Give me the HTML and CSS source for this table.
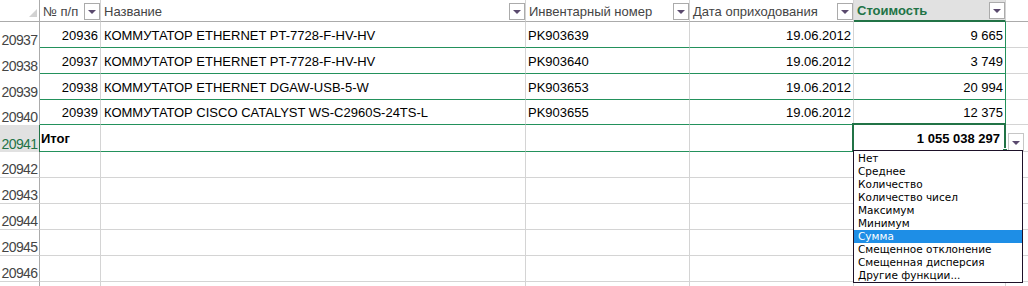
FILE: index.html
```html
<!DOCTYPE html>
<html lang="ru">
<head>
<meta charset="utf-8">
<title>Итог</title>
<link rel="stylesheet" href="styles.css">
</head>
<body>
<div class="sheet">
  <div class="row head">
    <div class="corner"><span class="tri"></span></div>
    <div class="hc"><span>№ п/п</span><span class="fb"></span></div>
    <div class="hc"><span>Название</span><span class="fb"></span></div>
    <div class="hc"><span>Инвентарный номер</span><span class="fb"></span></div>
    <div class="hc"><span>Дата оприходования</span><span class="fb"></span></div>
    <div class="hc active"><span>Стоимость</span><span class="fb"></span></div>
    <div class="hc rest"></div>
  </div>

  <div class="row data">
    <div class="rh">20937</div>
    <div class="c r">20936</div>
    <div class="c b">КОММУТАТОР ETHERNET PT-7728-F-HV-HV</div>
    <div class="c i">PK903639</div>
    <div class="c r">19.06.2012</div>
    <div class="c r last">9 665</div>
    <div class="c rest"></div>
  </div>
  <div class="row data">
    <div class="rh">20938</div>
    <div class="c r">20937</div>
    <div class="c b">КОММУТАТОР ETHERNET PT-7728-F-HV-HV</div>
    <div class="c i">PK903640</div>
    <div class="c r">19.06.2012</div>
    <div class="c r last">3 749</div>
    <div class="c rest"></div>
  </div>
  <div class="row data">
    <div class="rh">20939</div>
    <div class="c r">20938</div>
    <div class="c b">КОММУТАТОР ETHERNET DGAW-USB-5-W</div>
    <div class="c i">PK903653</div>
    <div class="c r">19.06.2012</div>
    <div class="c r last">20 994</div>
    <div class="c rest"></div>
  </div>
  <div class="row data short">
    <div class="rh">20940</div>
    <div class="c r">20939</div>
    <div class="c b">КОММУТАТОР CISCO CATALYST WS-C2960S-24TS-L</div>
    <div class="c i">PK903655</div>
    <div class="c r">19.06.2012</div>
    <div class="c r last">12 375</div>
    <div class="c rest"></div>
  </div>

  <div class="row total">
    <div class="rh sel">20941</div>
    <div class="c t">Итог</div>
    <div class="c"></div>
    <div class="c"></div>
    <div class="c"></div>
    <div class="c r last tv">1 055 038 297<span class="handle"></span></div>
    <div class="c rest"><span class="ddb"></span></div>
  </div>

  <div class="row empty">
    <div class="rh">20942</div>
    <div class="c"></div><div class="c"></div><div class="c"></div><div class="c"></div><div class="c"></div><div class="c rest"></div>
  </div>
  <div class="row empty">
    <div class="rh">20943</div>
    <div class="c"></div><div class="c"></div><div class="c"></div><div class="c"></div><div class="c"></div><div class="c rest"></div>
  </div>
  <div class="row empty">
    <div class="rh">20944</div>
    <div class="c"></div><div class="c"></div><div class="c"></div><div class="c"></div><div class="c"></div><div class="c rest"></div>
  </div>
  <div class="row empty">
    <div class="rh">20945</div>
    <div class="c"></div><div class="c"></div><div class="c"></div><div class="c"></div><div class="c"></div><div class="c rest"></div>
  </div>
  <div class="row empty">
    <div class="rh">20946</div>
    <div class="c"></div><div class="c"></div><div class="c"></div><div class="c"></div><div class="c"></div><div class="c rest"></div>
  </div>
  <div class="row empty">
    <div class="rh"></div>
    <div class="c"></div><div class="c"></div><div class="c"></div><div class="c"></div><div class="c"></div><div class="c rest"></div>
  </div>

  <ul class="menu">
    <li>Нет</li>
    <li>Среднее</li>
    <li>Количество</li>
    <li>Количество чисел</li>
    <li>Максимум</li>
    <li>Минимум</li>
    <li class="hl">Сумма</li>
    <li>Смещенное отклонение</li>
    <li>Смещенная дисперсия</li>
    <li>Другие функции...</li>
  </ul>
</div>
</body>
</html>
```

FILE: styles.css
```css
* { box-sizing: border-box; }
html, body {
  margin: 0;
  padding: 0;
  background: #fff;
  overflow: hidden;
}
body {
  font-family: "Liberation Sans", Arial, sans-serif;
  font-size: 13px;
  color: #000;
}
.sheet {
  position: relative;
  width: 1028px;
  height: 286px;
  overflow: hidden;
}
.row {
  display: grid;
  grid-template-columns: 40px 61px 425px 164px 164px 152px 1fr;
  height: 26px;
}
.row.head { height: 22px; }
.row.short { height: 25px; }
.row.total { height: 27px; }

/* header */
.corner {
  display: flex;
  justify-content: flex-end;
  align-items: flex-end;
  padding: 0 2px 4px 0;
  border-right: 1px solid #ababab;
  border-bottom: 1px solid #ababab;
}
.tri {
  width: 0;
  height: 0;
  border-left: 8px solid transparent;
  border-bottom: 8px solid #d2d2d2;
}
.hc {
  display: flex;
  align-items: center;
  justify-content: space-between;
  padding: 0 0 0 3px;
  border-right: 1px solid #d4d4d4;
  border-bottom: 1px solid #ababab;
  color: #444;
  white-space: nowrap;
}
.hc > span:first-child { padding-top: 1px; }
.hc.active {
  background: #e1e1e1;
  color: #217346;
  font-weight: bold;
  border-bottom: 2px solid #217346;
}
.hc.rest { border-right: none; }
.fb {
  width: 16px;
  height: 17px;
  margin-top: 1px;
  border: 1px solid #ababab;
  background: #fff;
  display: flex;
  align-items: center;
  justify-content: center;
}
.fb::after, .ddb::after {
  content: "";
  width: 0;
  height: 0;
  border-left: 4px solid transparent;
  border-right: 4px solid transparent;
  border-top: 4px solid #5a4a6e;
  margin-top: 1px;
}

/* row header */
.rh {
  display: flex;
  justify-content: center;
  align-items: flex-end;
  padding-bottom: 1px;
  font-size: 14px;
  letter-spacing: -0.6px;
  line-height: 14px;
  color: #444;
  border-right: 1px solid #ababab;
}
.empty .rh { border-bottom: 1px solid #d4d4d4; }
.rh.sel {
  background: #e1e1e1;
  color: #217346;
  border-right: 1px solid #217346;
}

/* cells */
.c {
  display: flex;
  align-items: flex-end;
  padding: 0 2px 4px 3px;
  line-height: 15px;
  white-space: nowrap;
  border-right: 1px solid #d4d4d4;
  border-bottom: 1px solid #d4d4d4;
}
.data .c, .total .c { border-bottom-color: #23915c; }
.c.r { justify-content: flex-end; }
.c.i { padding-left: 2px; }
.c.last { border-right-color: #23915c; }
.c.rest { border-right: none; border-bottom-color: #d4d4d4; }
.data .c.rest, .total .c.rest { border-bottom-color: #d4d4d4; }
.c.t { font-weight: bold; padding-left: 1px; padding-bottom: 5px; }
.tv {
  position: relative;
  font-weight: bold;
  padding-right: 5px;
  padding-bottom: 5px;
}
.tv::before {
  content: "";
  position: absolute;
  top: -2px;
  left: -2px;
  right: -1px;
  bottom: -1px;
  border: 2px solid #217346;
}
.handle {
  position: absolute;
  right: -3px;
  bottom: -3px;
  width: 6px;
  height: 6px;
  background: #217346;
  border: 1px solid #fff;
}
.total .c.rest {
  padding: 0 0 0 2px;
  align-items: flex-end;
}
.ddb {
  width: 16px;
  height: 18px;
  border: 1px solid #c6c6c6;
  background: #fff;
  display: flex;
  align-items: center;
  justify-content: center;
}

/* dropdown list */
.menu {
  position: absolute;
  left: 853px;
  top: 150px;
  width: 170px;
  height: 133px;
  margin: 0;
  padding: 1px 0 0;
  list-style: none;
  background: #fff;
  border: 1px solid #1d1128;
  font-family: "DejaVu Sans", Tahoma, sans-serif;
  font-size: 10.5px;
}
.menu li {
  height: 13px;
  line-height: 13px;
  padding-left: 4px;
  white-space: nowrap;
}
.menu li.hl {
  background: #1e8ee6;
  color: #fff;
}
```
